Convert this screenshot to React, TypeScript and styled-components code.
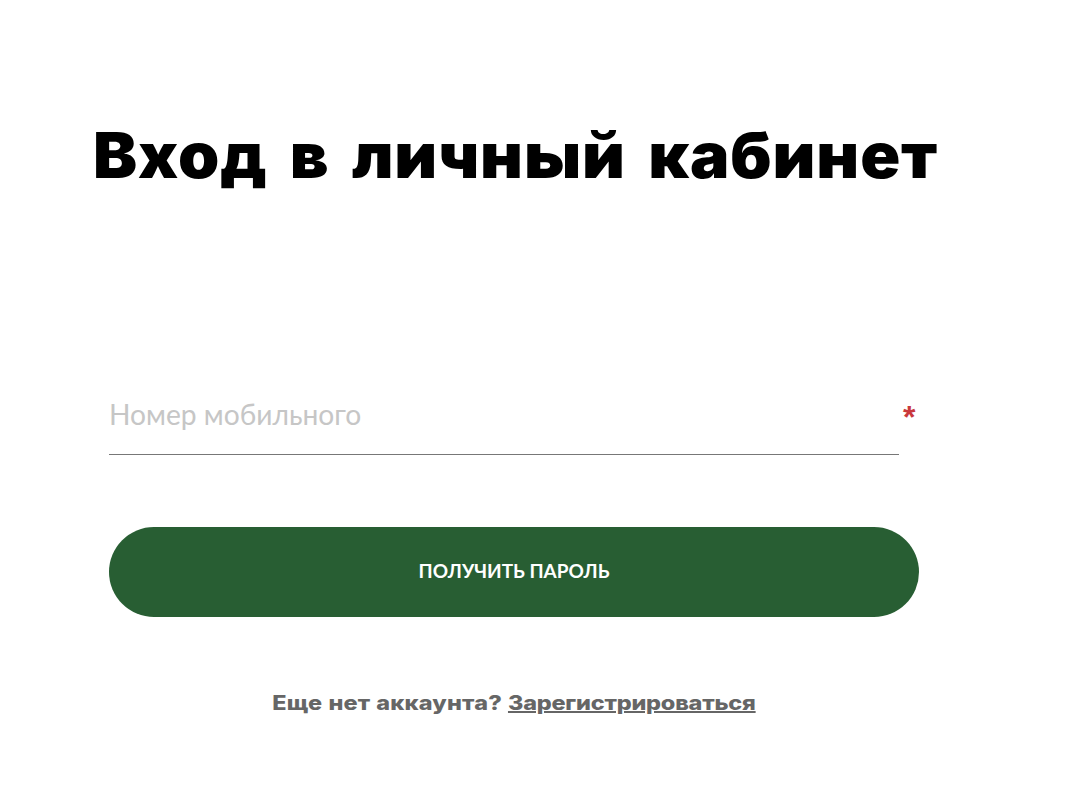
import { useState } from "react";
import styled, { createGlobalStyle } from "styled-components";

const GlobalStyle = createGlobalStyle`
  html, body {
    margin: 0;
    padding: 0;
    background: #ffffff;
  }
  * {
    box-sizing: border-box;
  }
`;

const Page = styled.div`
  width: 1074px;
  height: 794px;
  overflow: hidden;
  padding: 120px 0 0 109px;
  font-family: "Lato", "Liberation Sans", sans-serif;
`;

const Title = styled.h1`
  margin: 0 0 0 -16px;
  width: 900px;
  height: 70px;
  font-family: "Inter", "Liberation Sans", sans-serif;
  font-size: 63px;
  line-height: 70px;
  font-weight: 900;
  letter-spacing: 0.8px;
  word-spacing: 8px;
  white-space: nowrap;
  color: #000000;
  transform: scaleX(1.05);
  transform-origin: left center;
`;

const Form = styled.form`
  width: 810px;
  margin-top: 190px;
  display: flex;
  flex-direction: column;
`;

const PhoneField = styled.label`
  position: relative;
  display: block;
  width: 790px;
  height: 75px;
  border-bottom: 1px solid #777777;
`;

const PhoneInput = styled.input`
  display: block;
  width: 100%;
  height: 68px;
  padding: 0;
  border: 0;
  outline: none;
  background: transparent;
  font-family: "Lato", sans-serif;
  font-size: 28.2px;
  color: #333333;

  &::placeholder {
    color: #c6c6c6;
    opacity: 1;
  }
`;

const Required = styled.span`
  position: absolute;
  top: 20px;
  left: 794px;
  font-family: "Liberation Sans", sans-serif;
  font-size: 32px;
  line-height: 34px;
  font-weight: 700;
  color: #c9383c;
`;

const SubmitButton = styled.button`
  height: 90px;
  margin-top: 72px;
  padding: 0 0 3px;
  border: 0;
  border-radius: 45px;
  background: #285e33;
  font-family: "Lato", sans-serif;
  font-size: 19px;
  font-weight: 700;
  color: #ffffff;
  cursor: pointer;
`;

const Footer = styled.div`
  width: 810px;
  margin-top: 74px;
  text-align: center;
  font-family: "Inter", "Liberation Sans", sans-serif;
  font-size: 20px;
  line-height: 24px;
  font-weight: 800;
  letter-spacing: 0.15px;
  word-spacing: 0.6px;
  color: #666666;
  transform: scaleX(1.173);
`;

const FooterLink = styled.a`
  color: #666666;
  letter-spacing: -0.19px;
  text-decoration: underline;
`;

export default function App() {
  const [phone, setPhone] = useState("");

  return (
    <Page>
      <GlobalStyle />
      <Title>Вход в личный кабинет</Title>
      <Form onSubmit={(e) => e.preventDefault()}>
        <PhoneField>
          <PhoneInput
            type="tel"
            placeholder="Номер мобильного"
            value={phone}
            onChange={(e) => setPhone(e.target.value)}
          />
          <Required>*</Required>
        </PhoneField>
        <SubmitButton type="submit">ПОЛУЧИТЬ ПАРОЛЬ</SubmitButton>
      </Form>
      <Footer>
        Еще нет аккаунта? <FooterLink href="#">Зарегистрироваться</FooterLink>
      </Footer>
    </Page>
  );
}
